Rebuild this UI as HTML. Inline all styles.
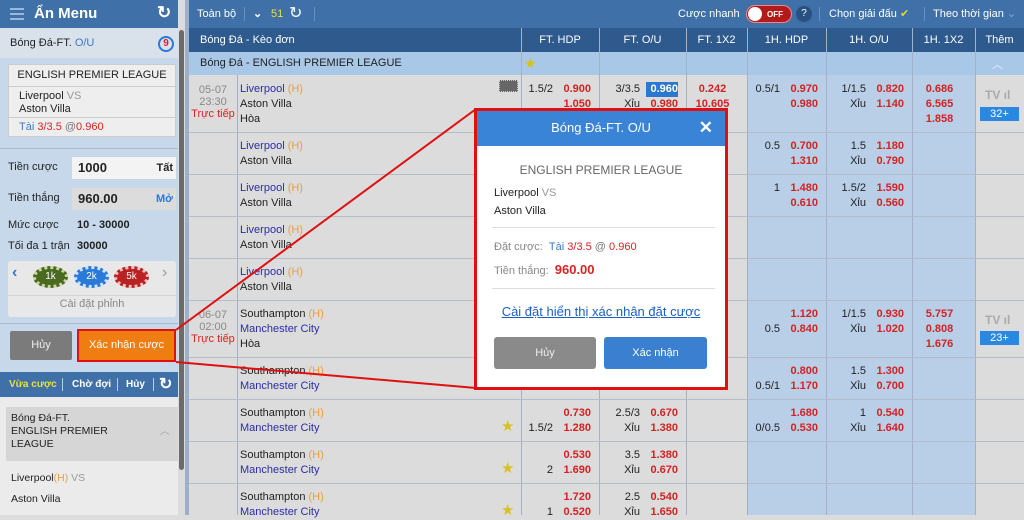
<!DOCTYPE html>
<html><head><meta charset="utf-8"><style>
*{margin:0;padding:0;box-sizing:border-box}
body{width:1024px;height:515px;overflow:hidden;position:relative;font-family:"Liberation Sans",Arial,sans-serif;font-size:11px;color:#222;background:#dcdcdc}
.a{position:absolute}
.c{position:absolute;padding-top:7px}
.c p{display:flex;justify-content:flex-end;height:15px;line-height:15px;padding-right:8px}
.c p i{font-style:normal;color:#222;margin-right:6px}
.c p b{color:#d42222;width:32px;text-align:right;font-weight:bold}
.x p{justify-content:center}.x p b{width:auto}
.t{left:237px;width:284px;padding-left:3px}
.t div{height:15px;line-height:15px}
.bl{color:#2c2ca8}.h{color:#e8a040}
.vl{position:absolute;top:28px;bottom:0;width:1px;background:#a5b1c5}
.hl{position:absolute;left:189px;right:0;height:1px;background:#b4bccb}
.hd{position:absolute;top:28px;height:24px;line-height:24px;color:#fff;font-size:11px;text-align:center}
</style></head><body>
<!-- sidebar -->
<div class="a" style="left:0;top:0;width:182px;height:515px;background:#c7d8ea"></div>
<div class="a" style="left:0;top:0;width:182px;height:28px;background:#3f70a8;color:#fff;font-size:15px;font-weight:bold;line-height:28px;padding-left:34px">Ẩn Menu</div>
<div class="a" style="left:10px;top:8px;width:14px;height:12px;border-top:2px solid #9cb8d8;border-bottom:2px solid #9cb8d8"><div style="margin-top:3px;height:2px;background:#9cb8d8"></div></div>
<div class="a" style="left:157px;top:3px;color:#fff;font-size:17px;font-weight:bold">↻</div>
<div class="a" style="left:0;top:28px;width:182px;height:30px;background:#d9e2eb;line-height:30px;padding-left:10px;font-size:11px">Bóng Đá-FT. <span style="color:#3a7ad0">O/U</span></div>
<div class="a" style="left:158px;top:36px;width:16px;height:16px;border-radius:50%;border:2px solid #2a7ad8;color:#d22;font-size:10px;font-weight:bold;text-align:center;line-height:12px">9</div>
<div class="a" style="left:8px;top:64px;width:168px;height:73px;background:#eeeeee;border:1px solid #ccc"></div>
<div class="a" style="left:9px;top:66px;width:166px;text-align:center;font-size:11px;line-height:18px">ENGLISH PREMIER LEAGUE</div>
<div class="a" style="left:9px;top:86px;width:166px;height:1px;background:#ccc"></div>
<div class="a" style="left:19px;top:90px;line-height:13px">Liverpool <span style="color:#999">VS</span><br>Aston Villa</div>
<div class="a" style="left:9px;top:117px;width:166px;height:1px;background:#ccc"></div>
<div class="a" style="left:19px;top:120px;line-height:14px"><span style="color:#3a7ad0">Tài</span> <span style="color:#d22">3/3.5</span> <span style="color:#777">@</span><span style="color:#d22">0.960</span></div>
<div class="a" style="left:0;top:148px;width:182px;height:1px;background:#aab8c8"></div>
<div class="a" style="left:8px;top:161px">Tiền cược</div>
<div class="a" style="left:72px;top:157px;width:104px;height:22px;background:#f3f3f3;font-weight:bold;font-size:13px;line-height:22px;padding-left:6px">1000<span style="position:absolute;right:3px;font-size:11px">Tất</span></div>
<div class="a" style="left:8px;top:192px">Tiền thắng</div>
<div class="a" style="left:72px;top:188px;width:104px;height:22px;background:#dcdcdc;font-weight:bold;font-size:13px;line-height:22px;padding-left:6px">960.00<span style="position:absolute;right:3px;font-size:11px;color:#2a7ad8">Mở</span></div>
<div class="a" style="left:8px;top:219px">Mức cược</div>
<div class="a" style="left:77px;top:219px;font-weight:bold">10 - 30000</div>
<div class="a" style="left:8px;top:240px">Tối đa 1 trận</div>
<div class="a" style="left:77px;top:240px;font-weight:bold">30000</div>
<div class="a" style="left:8px;top:261px;width:168px;height:56px;background:#e8e8e8;border-radius:3px"></div>
<div class="a" style="left:8px;top:295px;width:168px;height:1px;background:#d4d4d4"></div>
<div class="a" style="left:12px;top:264px;color:#2a7ad8;font-size:16px;font-weight:bold">‹</div>
<div class="a" style="left:162px;top:264px;color:#999;font-size:16px">›</div>
<div class="a" style="left:33px;top:266px;width:35px;height:22px;border-radius:50%;background:#4a6a22;border:3px dotted #c8d8a0;color:#fff;text-align:center;font-size:10px;line-height:16px">1k</div>
<div class="a" style="left:74px;top:266px;width:35px;height:22px;border-radius:50%;background:#2a7ad8;border:3px dotted #cfe3ff;color:#fff;text-align:center;font-size:10px;line-height:16px">2k</div>
<div class="a" style="left:114px;top:266px;width:35px;height:22px;border-radius:50%;background:#b82222;border:3px dotted #f0c0c0;color:#fff;text-align:center;font-size:10px;line-height:16px">5k</div>
<div class="a" style="left:8px;top:298px;width:168px;text-align:center;color:#888;font-size:11px">Cài đặt phỉnh</div>
<div class="a" style="left:0;top:323px;width:182px;height:1px;background:#aab8c8"></div>
<div class="a" style="left:10px;top:331px;width:62px;height:29px;background:#7b7b7b;color:#eee;border-radius:2px;text-align:center;line-height:29px">Hủy</div>
<div class="a" style="left:79px;top:331px;width:95px;height:29px;background:#ef7d12;color:#fff;text-align:center;line-height:29px">Xác nhận cược</div>
<div class="a" style="left:77px;top:329px;width:99px;height:33px;border:2px solid #e01010"></div>
<div class="a" style="left:0;top:372px;width:182px;height:25px;background:#3f70a8;color:#fff;font-weight:bold;font-size:10px;line-height:25px"><span style="position:absolute;left:9px;color:#e8e040">Vừa cược</span><span style="position:absolute;left:62px;top:6px;width:1px;height:13px;background:#bcd"></span><span style="position:absolute;left:72px">Chờ đợi</span><span style="position:absolute;left:117px;top:6px;width:1px;height:13px;background:#bcd"></span><span style="position:absolute;left:126px">Hủy</span><span style="position:absolute;left:153px;top:6px;width:1px;height:13px;background:#bcd"></span><span style="position:absolute;left:159px;font-size:16px">↻</span></div>
<div class="a" style="left:0;top:397px;width:182px;height:118px;background:#ebebeb"></div>
<div class="a" style="left:6px;top:407px;width:172px;height:54px;background:#d6d6d6;padding:5px 5px;line-height:13px;font-size:10.5px">Bóng Đá-FT.<br>ENGLISH PREMIER<br>LEAGUE<span style="position:absolute;right:8px;top:18px;color:#aaa">︿</span></div>
<div class="a" style="left:11px;top:472px;font-size:10.5px">Liverpool<span class="h">(H)</span> <span style="color:#999">VS</span></div>
<div class="a" style="left:11px;top:493px;font-size:10.5px">Aston Villa</div>
<div class="a" style="left:178px;top:0;width:7px;height:515px;background:#dcdcdc"></div>
<div class="a" style="left:179px;top:30px;width:5px;height:440px;background:#6b6b6b;border-radius:3px"></div>
<div class="a" style="left:185px;top:0;width:4px;height:515px;background:#9eb0c8"></div>
<!-- main top bar -->
<div class="a" style="left:189px;top:0;width:835px;height:28px;background:#3f70a8;color:#fff;line-height:28px">
<span class="a" style="left:8px">Toàn bộ</span><span class="a" style="left:55px;top:7px;width:1px;height:14px;background:#6a90c0"></span>
<span class="a" style="left:64px;font-weight:bold">⌄</span><span class="a" style="left:82px;color:#e8e040">51</span><span class="a" style="left:100px;font-size:16px">↻</span><span class="a" style="left:125px;top:7px;width:1px;height:14px;background:#6a90c0"></span>
<span class="a" style="left:489px">Cược nhanh</span>
<span class="a" style="left:557px;top:5px;width:46px;height:18px;border-radius:9px;background:#b51a1a;border:1px solid #e88"><span style="position:absolute;left:1px;top:1px;width:14px;height:14px;border-radius:50%;background:#fff"></span><span style="position:absolute;left:20px;top:-5px;font-size:8px;font-weight:bold">OFF</span></span>
<span class="a" style="left:607px;top:6px;width:16px;height:16px;border-radius:50%;background:#2a5080;text-align:center;line-height:16px;font-size:10px">?</span>
<span class="a" style="left:630px;top:7px;width:1px;height:14px;background:#6a90c0"></span>
<span class="a" style="left:640px">Chọn giải đấu <span style="color:#e8d040">✔</span></span>
<span class="a" style="left:735px;top:7px;width:1px;height:14px;background:#6a90c0"></span>
<span class="a" style="left:744px">Theo thời gian <span style="color:#8aaad0">⌄</span></span>
</div>
<div class="a" style="left:189px;top:28px;width:835px;height:24px;background:#2e5a8e"></div>
<div class="hd" style="left:200px;text-align:left">Bóng Đá - Kèo đơn</div>
<div class="hd" style="left:521px;width:78px">FT. HDP</div>
<div class="hd" style="left:599px;width:87px">FT. O/U</div>
<div class="hd" style="left:686px;width:61px">FT. 1X2</div>
<div class="hd" style="left:747px;width:79px">1H. HDP</div>
<div class="hd" style="left:826px;width:86px">1H. O/U</div>
<div class="hd" style="left:912px;width:63px">1H. 1X2</div>
<div class="hd" style="left:975px;width:49px">Thêm</div>
<div class="a" style="left:189px;top:52px;width:835px;height:23px;background:#a9c8e8;line-height:23px;padding-left:11px">Bóng Đá - ENGLISH PREMIER LEAGUE</div>
<div class="a" style="left:524px;top:55px;color:#d8c020;font-size:14px">★</div>
<div class="a" style="left:992px;top:56px;color:#eef;font-size:11px">︿</div>
<!-- row backgrounds -->
<div class="a" style="left:189px;top:75px;width:835px;height:440px;background:#dcdcdc"></div>
<div class="a" style="left:747px;top:75px;width:228px;height:440px;background:#b9cfe8"></div>
<!-- grid -->
<div class="vl" style="left:237px;top:75px"></div><div class="vl" style="left:521px"></div><div class="vl" style="left:599px"></div><div class="vl" style="left:686px"></div><div class="vl" style="left:747px"></div><div class="vl" style="left:826px"></div><div class="vl" style="left:912px"></div><div class="vl" style="left:975px"></div>
<div class="hl" style="top:132px"></div><div class="hl" style="top:174px"></div><div class="hl" style="top:216px"></div><div class="hl" style="top:258px"></div><div class="hl" style="top:300px"></div><div class="hl" style="top:357px"></div><div class="hl" style="top:399px"></div><div class="hl" style="top:441px"></div><div class="hl" style="top:483px"></div>
<!-- time col -->
<div class="a" style="left:189px;top:84px;width:48px;text-align:center;line-height:12px;color:#888">05-07<br>23:30<br><span style="color:#d22">Trực tiếp</span></div>
<div class="a" style="left:189px;top:309px;width:48px;text-align:center;line-height:12px;color:#888">06-07<br>02:00<br><span style="color:#d22">Trực tiếp</span></div>
<!-- teams -->
<div class="c t" style="top:75px"><div><span class="bl">Liverpool</span> <span class="h">(H)</span></div><div>Aston Villa</div><div>Hòa</div></div>
<div class="a" style="left:499px;top:80px;width:19px;height:12px;background:#666;border:1px dotted #ccc"></div>
<div class="c t" style="top:132px"><div><span class="bl">Liverpool</span> <span class="h">(H)</span></div><div>Aston Villa</div></div>
<div class="c t" style="top:174px"><div><span class="bl">Liverpool</span> <span class="h">(H)</span></div><div>Aston Villa</div></div>
<div class="c t" style="top:216px"><div><span class="bl">Liverpool</span> <span class="h">(H)</span></div><div>Aston Villa</div></div>
<div class="c t" style="top:258px"><div><span class="bl">Liverpool</span> <span class="h">(H)</span></div><div>Aston Villa</div></div>
<div class="c t" style="top:300px"><div>Southampton <span class="h">(H)</span></div><div class="bl">Manchester City</div><div>Hòa</div></div>
<div class="c t" style="top:357px"><div>Southampton <span class="h">(H)</span></div><div class="bl">Manchester City</div></div>
<div class="c t" style="top:399px"><div>Southampton <span class="h">(H)</span></div><div class="bl">Manchester City</div></div>
<div class="c t" style="top:441px"><div>Southampton <span class="h">(H)</span></div><div class="bl">Manchester City</div></div>
<div class="c t" style="top:483px"><div>Southampton <span class="h">(H)</span></div><div class="bl">Manchester City</div></div>
<div class="a" style="left:501px;top:417px;color:#d8c020;font-size:15px">★</div>
<div class="a" style="left:501px;top:459px;color:#d8c020;font-size:15px">★</div>
<div class="a" style="left:501px;top:501px;color:#d8c020;font-size:15px">★</div>
<!-- odds row1 -->
<div class="c" style="left:521px;width:78px;top:75px"><p><i>1.5/2</i><b>0.900</b></p><p><b>1.050</b></p></div>
<div class="c" style="left:599px;width:87px;top:75px"><p><i>3/3.5</i><b style="background:#2a78d0;color:#fff">0.960</b></p><p><i>Xỉu</i><b>0.980</b></p></div>
<div class="c x" style="left:686px;width:61px;top:75px"><p><b>0.242</b></p><p><b>10.605</b></p></div>
<div class="c" style="left:747px;width:79px;top:75px"><p><i>0.5/1</i><b>0.970</b></p><p><b>0.980</b></p></div>
<div class="c" style="left:826px;width:86px;top:75px"><p><i>1/1.5</i><b>0.820</b></p><p><i>Xỉu</i><b>1.140</b></p></div>
<div class="c x" style="left:912px;width:63px;top:75px"><p><b>0.686</b></p><p><b>6.565</b></p><p><b>1.858</b></p></div>
<div class="a" style="left:985px;top:88px;color:#aaa;font-size:12px;font-weight:bold">TV ıl</div>
<div class="a" style="left:980px;top:107px;width:39px;height:14px;background:#2a88e0;color:#fff;text-align:center;line-height:14px">32+</div>
<!-- row2 -->
<div class="c" style="left:747px;width:79px;top:132px"><p><i>0.5</i><b>0.700</b></p><p><b>1.310</b></p></div>
<div class="c" style="left:826px;width:86px;top:132px"><p><i>1.5</i><b>1.180</b></p><p><i>Xỉu</i><b>0.790</b></p></div>
<div class="c" style="left:747px;width:79px;top:174px"><p><i>1</i><b>1.480</b></p><p><b>0.610</b></p></div>
<div class="c" style="left:826px;width:86px;top:174px"><p><i>1.5/2</i><b>1.590</b></p><p><i>Xỉu</i><b>0.560</b></p></div>
<!-- row6 -->
<div class="c" style="left:747px;width:79px;top:300px"><p><b>1.120</b></p><p><i>0.5</i><b>0.840</b></p></div>
<div class="c" style="left:826px;width:86px;top:300px"><p><i>1/1.5</i><b>0.930</b></p><p><i>Xỉu</i><b>1.020</b></p></div>
<div class="c x" style="left:912px;width:63px;top:300px"><p><b>5.757</b></p><p><b>0.808</b></p><p><b>1.676</b></p></div>
<div class="a" style="left:985px;top:313px;color:#aaa;font-size:12px;font-weight:bold">TV ıl</div>
<div class="a" style="left:980px;top:331px;width:39px;height:14px;background:#2a88e0;color:#fff;text-align:center;line-height:14px">23+</div>
<div class="c" style="left:747px;width:79px;top:357px"><p><b>0.800</b></p><p><i>0.5/1</i><b>1.170</b></p></div>
<div class="c" style="left:826px;width:86px;top:357px"><p><i>1.5</i><b>1.300</b></p><p><i>Xỉu</i><b>0.700</b></p></div>
<div class="c" style="left:521px;width:78px;top:399px"><p><b>0.730</b></p><p><i>1.5/2</i><b>1.280</b></p></div>
<div class="c" style="left:599px;width:87px;top:399px"><p><i>2.5/3</i><b>0.670</b></p><p><i>Xỉu</i><b>1.380</b></p></div>
<div class="c" style="left:747px;width:79px;top:399px"><p><b>1.680</b></p><p><i>0/0.5</i><b>0.530</b></p></div>
<div class="c" style="left:826px;width:86px;top:399px"><p><i>1</i><b>0.540</b></p><p><i>Xỉu</i><b>1.640</b></p></div>
<div class="c" style="left:521px;width:78px;top:441px"><p><b>0.530</b></p><p><i>2</i><b>1.690</b></p></div>
<div class="c" style="left:599px;width:87px;top:441px"><p><i>3.5</i><b>1.380</b></p><p><i>Xỉu</i><b>0.670</b></p></div>
<div class="c" style="left:521px;width:78px;top:483px"><p><b>1.720</b></p><p><i>1</i><b>0.520</b></p></div>
<div class="c" style="left:599px;width:87px;top:483px"><p><i>2.5</i><b>0.540</b></p><p><i>Xỉu</i><b>1.650</b></p></div>
<!-- red lines -->
<svg class="a" style="left:0;top:0" width="1024" height="515"><line x1="176" y1="330" x2="476" y2="109" stroke="#e01010" stroke-width="2"/><line x1="176" y1="362" x2="476" y2="388" stroke="#e01010" stroke-width="2"/></svg>
<!-- popup -->
<div class="a" style="left:474px;top:108px;width:254px;height:282px;border:3px solid #e01010;background:#fff"></div>
<div class="a" style="left:477px;top:111px;width:248px;height:35px;background:#3a84d8;color:#fff;font-size:13px;text-align:center;line-height:33px">Bóng Đá-FT. O/U<span style="position:absolute;right:12px;font-size:17px;font-weight:bold">✕</span></div>
<div class="a" style="left:477px;top:163px;width:248px;text-align:center;color:#666;font-size:12px">ENGLISH PREMIER LEAGUE</div>
<div class="a" style="left:494px;top:184px;line-height:18px">Liverpool <span style="color:#999">VS</span><br>Aston Villa</div>
<div class="a" style="left:492px;top:227px;width:223px;height:1px;background:#ddd"></div>
<div class="a" style="left:494px;top:241px;color:#888">Đặt cược: &nbsp;<span style="color:#3a7ad0">Tài</span> <span style="color:#d22">3/3.5</span> <span style="color:#777">@</span> <span style="color:#d22">0.960</span></div>
<div class="a" style="left:494px;top:262px;color:#888">Tiền thắng: &nbsp;<span style="color:#d22;font-weight:bold;font-size:13px">960.00</span></div>
<div class="a" style="left:492px;top:288px;width:223px;height:1px;background:#ddd"></div>
<div class="a" style="left:477px;top:304px;width:248px;text-align:center;color:#1a5ec8;font-size:13px;text-decoration:underline">Cài đặt hiển thị xác nhận đặt cược</div>
<div class="a" style="left:494px;top:337px;width:102px;height:32px;background:#8a8a8a;color:#eee;border-radius:3px;text-align:center;line-height:32px">Hủy</div>
<div class="a" style="left:604px;top:337px;width:103px;height:32px;background:#3a7fd0;color:#fff;border-radius:3px;text-align:center;line-height:32px">Xác nhận</div>
</body></html>
